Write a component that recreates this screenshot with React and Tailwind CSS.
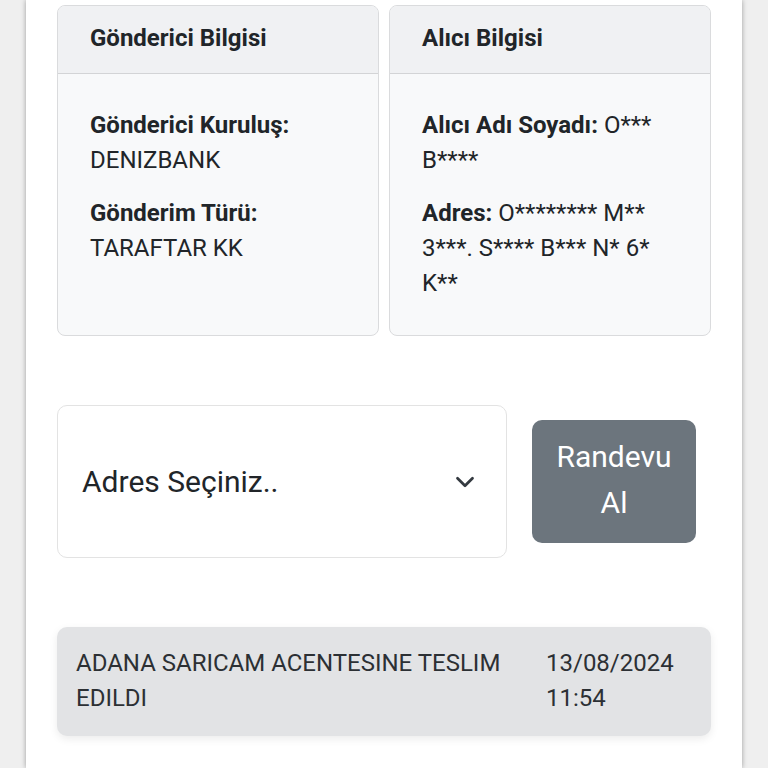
import { ChevronDown } from 'lucide-react';

const font = { fontFamily: 'Roboto, "Noto Sans", sans-serif' };

function InfoCard({ title, children }) {
  return (
    <div className="flex flex-col rounded-[8px] border border-[#dadbdd] bg-[#f8f9fa] overflow-hidden">
      <div className="border-b border-[#d3d4d6] bg-[#f0f1f3] px-[32px] pt-[15px] pb-[17px] text-[24px] font-bold leading-[35px] text-[#212529]">
        {title}
      </div>
      <div className="flex-1 px-[32px] pt-[34px] pb-[34px] text-[24px] leading-[35px] text-[#212529]">
        {children}
      </div>
    </div>
  );
}

export default function App() {
  return (
    <div className="flex min-h-[768px] justify-center bg-[#efefef]" style={font}>
      <div className="w-[716px] min-h-[768px] bg-white px-[31px] pt-[5px] shadow-[0_0_5px_rgba(0,0,0,0.35)]">
        <div className="grid grid-cols-2 gap-[10px]">
          <InfoCard title="Gönderici Bilgisi">
            <p className="mb-[18px]">
              <span className="font-bold">Gönderici Kuruluş:</span>
              <br />
              DENIZBANK
            </p>
            <p>
              <span className="font-bold">Gönderim Türü:</span>
              <br />
              TARAFTAR KK
            </p>
          </InfoCard>
          <InfoCard title="Alıcı Bilgisi">
            <p className="mb-[18px]">
              <span className="font-bold">Alıcı Adı Soyadı:</span> O*** B****
            </p>
            <p>
              <span className="font-bold">Adres:</span> O******** M** 3***. S**** B*** N* 6* K**
            </p>
          </InfoCard>
        </div>

        <div className="mt-[69px] flex items-center gap-[25px]">
          <div className="flex h-[153px] w-[450px] items-center justify-between rounded-[10px] border border-[#e3e3e3] bg-white pl-[24px] pr-[26px]">
            <span className="text-[30px] text-[#212529]">Adres Seçiniz..</span>
            <ChevronDown className="h-[30px] w-[30px] text-[#343a40]" strokeWidth={2.2} />
          </div>
          <button className="w-[164px] rounded-[10px] bg-[#6c757d] px-5 pt-[14px] pb-[17px] text-[30px] leading-[46px] text-white">
            Randevu Al
          </button>
        </div>

        <div className="mt-[69px] flex rounded-[10px] bg-[#e2e3e5] pt-[19px] pb-5 pl-[19px] pr-5 text-[24px] leading-[35px] text-[#2c3034] shadow-[0_3px_8px_rgba(0,0,0,0.08)]">
          <div className="flex-1">ADANA SARICAM ACENTESINE TESLIM EDILDI</div>
          <div className="w-[145px] shrink-0">
            13/08/2024
            <br />
            11:54
          </div>
        </div>
      </div>
    </div>
  );
}
